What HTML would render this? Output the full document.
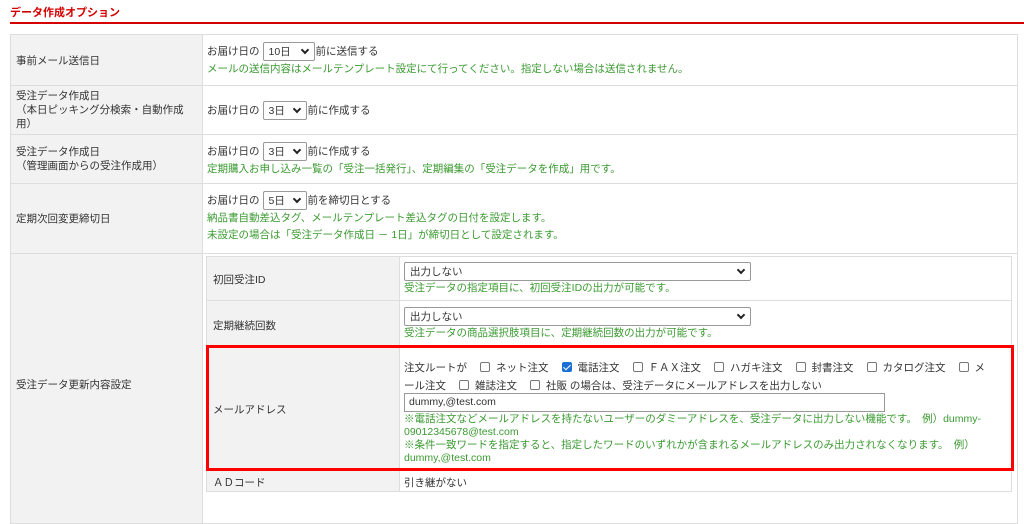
<!DOCTYPE html>
<html><head><meta charset="utf-8"><style>
*{box-sizing:border-box;margin:0;padding:0}
body{width:1024px;height:509px;overflow:hidden;background:#fff;font-family:"Liberation Sans","Noto Sans CJK JP",sans-serif;font-size:10.5px;color:#333;position:relative}
.a{position:absolute}
.lab{background:#f2f2f2}
.g{color:#3a9a30}
.sel{display:inline-block;border:1px solid #999;border-radius:2px;height:19px;vertical-align:middle;position:relative;background:#fff;padding:3px 5px;line-height:12px;margin:0 1px 0 3px}
.sel:after{content:"";position:absolute;right:6px;top:4px;width:4px;height:4px;border-right:2px solid #222;border-bottom:2px solid #222;transform:rotate(45deg)}
.cb{display:inline-block;width:10px;height:10px;border:1px solid #777;border-radius:2px;vertical-align:-1px;margin:0 6px 0 13px}
.cbk{background:#1a6fd6;border-color:#1a6fd6;position:relative}
.cbk:after{content:"";position:absolute;left:2px;top:0px;width:3px;height:6px;border-right:1.5px solid #fff;border-bottom:1.5px solid #fff;transform:rotate(45deg)}
.hl{background:#ddd}
.vl{background:#ddd}
</style></head><body>
<div class="a" style="left:10px;top:4px;color:#d40000;font-size:11px;font-weight:bold">データ作成オプション</div>
<div class="a" style="left:10px;top:22px;width:1014px;height:2px;background:#d40000"></div>

<div class="a" style="left:10px;top:34px;width:1008px;height:490px;border:1px solid #ddd"></div>
<div class="a lab" style="left:11px;top:35px;width:191px;height:488px"></div>
<div class="a vl" style="left:202px;top:34px;width:1px;height:490px"></div>
<div class="a hl" style="left:10px;top:85px;width:1008px;height:1px"></div>
<div class="a hl" style="left:10px;top:134px;width:1008px;height:1px"></div>
<div class="a hl" style="left:10px;top:183px;width:1008px;height:1px"></div>
<div class="a hl" style="left:10px;top:253px;width:1008px;height:1px"></div>

<div class="a" style="left:16px;top:53px">事前メール送信日</div>
<div class="a" style="left:16px;top:89px;line-height:14px">受注データ作成日<br>（本日ピッキング分検索・自動作成<br>用）</div>
<div class="a" style="left:16px;top:145px;line-height:14px">受注データ作成日<br>（管理画面からの受注作成用）</div>
<div class="a" style="left:16px;top:211px">定期次回変更締切日</div>
<div class="a" style="left:16px;top:377px">受注データ更新内容設定</div>

<div class="a" style="left:207px;top:42px;line-height:16px">お届け日の<span class="sel" style="width:52px">10日</span>前に送信する<br><span class="g">メールの送信内容はメールテンプレート設定にて行ってください。指定しない場合は送信されません。</span></div>
<div class="a" style="left:207px;top:101px">お届け日の<span class="sel" style="width:44px">3日</span>前に作成する</div>
<div class="a" style="left:207px;top:142px;line-height:16px">お届け日の<span class="sel" style="width:44px">3日</span>前に作成する<br><span class="g">定期購入お申し込み一覧の「受注一括発行」、定期編集の「受注データを作成」用です。</span></div>
<div class="a" style="left:207px;top:191px;line-height:17px">お届け日の<span class="sel" style="width:44px">5日</span>前を締切日とする<br><span class="g">納品書自動差込タグ、メールテンプレート差込タグの日付を設定します。<br>未設定の場合は「受注データ作成日 － 1日」が締切日として設定されます。</span></div>

<div class="a" style="left:206px;top:256px;width:806px;height:236px;border:1px solid #ddd"></div>
<div class="a lab" style="left:207px;top:257px;width:192px;height:234px"></div>
<div class="a vl" style="left:399px;top:256px;width:1px;height:236px"></div>
<div class="a hl" style="left:206px;top:300px;width:806px;height:1px"></div>
<div class="a hl" style="left:206px;top:345px;width:806px;height:1px"></div>
<div class="a hl" style="left:206px;top:470px;width:806px;height:1px"></div>

<div class="a" style="left:213px;top:272px">初回受注ID</div>
<div class="a" style="left:213px;top:318px">定期継続回数</div>
<div class="a" style="left:213px;top:402px">メールアドレス</div>
<div class="a" style="left:213px;top:475px">ＡＤコード</div>

<div class="a" style="left:404px;top:262px;line-height:14px"><span class="sel" style="width:347px;margin:0">出力しない</span><br><span class="g">受注データの指定項目に、初回受注IDの出力が可能です。</span></div>
<div class="a" style="left:404px;top:307px;line-height:14px"><span class="sel" style="width:347px;margin:0">出力しない</span><br><span class="g">受注データの商品選択肢項目に、定期継続回数の出力が可能です。</span></div>

<div class="a" style="left:404px;top:359px;width:620px;line-height:18px;white-space:nowrap">注文ルートが<span class="cb"></span>ネット注文<span class="cb cbk"></span>電話注文<span class="cb"></span>ＦＡＸ注文<span class="cb"></span>ハガキ注文<span class="cb"></span>封書注文<span class="cb"></span>カタログ注文<span class="cb"></span>メ<br>ール注文<span class="cb"></span>雑誌注文<span class="cb"></span>社販 の場合は、受注データにメールアドレスを出力しない</div>
<div class="a" style="left:404px;top:393px;width:481px;height:19px;border:1px solid #999;padding:2px 4px;line-height:13px">dummy,@test.com</div>
<div class="a g" style="left:404px;top:413px;width:610px;line-height:13px">※電話注文などメールアドレスを持たないユーザーのダミーアドレスを、受注データに出力しない機能です。　例）dummy-09012345678@test.com<br>※条件一致ワードを指定すると、指定したワードのいずれかが含まれるメールアドレスのみ出力されなくなります。　例）dummy,@test.com</div>
<div class="a" style="left:404px;top:475px">引き継がない</div>

<div class="a" style="left:206px;top:345px;width:808px;height:126px;border:3px solid #f00"></div>
</body></html>
